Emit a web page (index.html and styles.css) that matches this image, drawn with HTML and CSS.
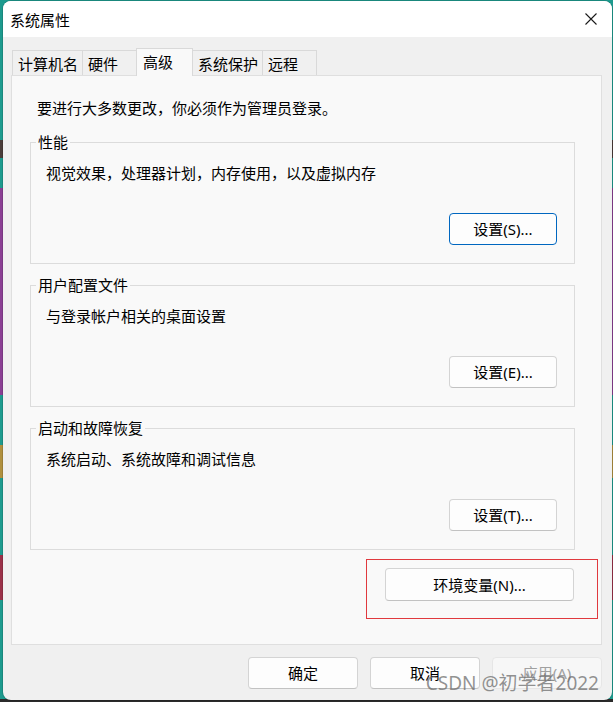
FILE: index.html
```html
<!DOCTYPE html>
<html lang="zh-CN">
<head>
<meta charset="utf-8">
<title>系统属性</title>
<link rel="stylesheet" href="styles.css">
</head>
<body>
<div class="window">
  <div class="titlebar">
    <span class="title">系统属性</span>
    <svg class="close" width="12" height="12" viewBox="0 0 12 12" aria-hidden="true">
      <path d="M0.5 0.5 L11.5 11.5 M11.5 0.5 L0.5 11.5" stroke="#1a1a1a" stroke-width="1.1" fill="none"/>
    </svg>
  </div>
  <div class="content">
    <div class="tabs">
      <div class="tab">计算机名</div>
      <div class="tab">硬件</div>
      <div class="tab active">高级</div>
      <div class="tab">系统保护</div>
      <div class="tab">远程</div>
    </div>
    <div class="panel">
      <p class="intro">要进行大多数更改，你必须作为管理员登录。</p>
      <fieldset class="group">
        <legend>性能</legend>
        <p class="desc">视觉效果，处理器计划，内存使用，以及虚拟内存</p>
        <div class="group-actions"><button class="btn btn-set btn-default">设置(S)...</button></div>
      </fieldset>
      <fieldset class="group">
        <legend>用户配置文件</legend>
        <p class="desc">与登录帐户相关的桌面设置</p>
        <div class="group-actions"><button class="btn btn-set">设置(E)...</button></div>
      </fieldset>
      <fieldset class="group">
        <legend>启动和故障恢复</legend>
        <p class="desc">系统启动、系统故障和调试信息</p>
        <div class="group-actions"><button class="btn btn-set">设置(T)...</button></div>
      </fieldset>
      <div class="env-highlight"><button class="btn btn-env">环境变量(N)...</button></div>
    </div>
    <div class="footer">
      <button class="btn btn-footer">确定</button>
      <button class="btn btn-footer">取消</button>
      <button class="btn btn-footer btn-disabled">应用(A)</button>
    </div>
  </div>
  <div class="watermark">CSDN @初学者2022</div>
</div>
</body>
</html>
```
FILE: styles.css
```css
html {
  background: linear-gradient(to bottom,
    #1d9a8e 0, #1d9a8e 140px, #4a3d3a 140px, #4a3d3a 158px,
    #1d9a8e 158px, #1d9a8e 188px, #8a3f93 188px, #8a3f93 395px,
    #1d9a8e 395px, #1d9a8e 445px, #b0903e 445px, #b0903e 478px,
    #1d9a8e 478px, #1d9a8e 555px, #9a3048 555px, #9a3048 600px,
    #1d9a8e 600px, #1d9a8e 699px, #2b2b2b 699px);
  height: 100%;
}

body {
  margin: 0;
  height: 702px;
  overflow: hidden;
  font-family: "Noto Sans", "Noto Sans CJK SC", sans-serif;
  font-size: 15px;
  color: #000;
}

.window {
  position: relative;
  margin: 1px 0 0 3px;
  width: 609px;
  height: 699px;
  background: #f0f0f0;
  border-radius: 8px;
  overflow: hidden;
  display: flex;
  flex-direction: column;
  box-shadow: 0 0 0 1px rgba(0, 0, 0, 0.12);
}

.titlebar {
  height: 36px;
  flex: none;
  background: #ffffff;
  display: flex;
  align-items: center;
  justify-content: space-between;
  padding: 0 15px 0 7px;
}

.title {
  font-size: 15px;
  line-height: 20px;
  padding-top: 2px;
}

.close {
  display: block;
}

.content {
  flex: 1;
  display: flex;
  flex-direction: column;
  padding: 11px 10px 0 8px;
}

.tabs {
  display: flex;
  align-items: flex-end;
  height: 27px;
  padding-left: 1px;
}

.tab {
  box-sizing: border-box;
  height: 25px;
  min-width: 55px;
  padding: 1px 4px 0 5px;
  line-height: 24px;
  border: 1px solid #d9d9d9;
  border-bottom: none;
  background: #f0f0f0;
  margin-left: -1px;
  white-space: nowrap;
}

.tab:first-child {
  margin-left: 0;
}

.tab.active {
  position: relative;
  z-index: 1;
  height: 28px;
  min-width: 57px;
  margin-bottom: -1px;
  padding: 0 4px 0 6px;
  line-height: 26px;
  background: #f9f9f9;
}

.panel {
  box-sizing: border-box;
  height: 570px;
  background: #f9f9f9;
  border: 1px solid #dfdfdf;
  padding: 0 3px 0 18px;
  display: flex;
  flex-direction: column;
}

.intro {
  margin: 22px 0 14px 7px;
  line-height: 20px;
}

.group {
  margin: 0 23px 11px 0;
  padding: 11px 17px 18px 15px;
  border: 1px solid #dcdcdc;
  min-width: 0;
}

.group legend {
  padding: 0 2px;
  margin-left: -10px;
  line-height: 20px;
}

.desc {
  margin: 0;
  line-height: 20px;
}

.group-actions {
  display: flex;
  justify-content: flex-end;
  margin-top: 30px;
}

.btn {
  box-sizing: border-box;
  font-family: "Noto Sans", "Noto Sans CJK SC", sans-serif;
  font-size: 15px;
  color: #000;
  background: #fdfdfd;
  border: 1px solid #d4d4d4;
  border-bottom-color: #c2c2c2;
  border-radius: 4px;
  padding: 0;
  line-height: 28px;
  text-align: center;
}

.btn-set {
  width: 108px;
  height: 32px;
}

.btn-default {
  border: 1px solid #0067c0;
}

.env-highlight {
  align-self: flex-end;
  margin-top: -2px;
  border: 1px solid #e0393e;
  padding: 8px 23px 17px 18px;
}

.btn-env {
  display: block;
  width: 189px;
  height: 33px;
}

.footer {
  display: flex;
  justify-content: flex-end;
  gap: 12px;
  margin-top: 12px;
}

.btn-footer {
  width: 110px;
  height: 32px;
}

.btn-disabled {
  background: #f7f7f7;
  border-color: #e6e6e6;
  color: #a0a0a0;
}

.watermark {
  position: absolute;
  right: 13px;
  bottom: 6px;
  font-size: 19px;
  line-height: 22px;
  color: rgba(105, 105, 105, 0.72);
  white-space: nowrap;
}
```
